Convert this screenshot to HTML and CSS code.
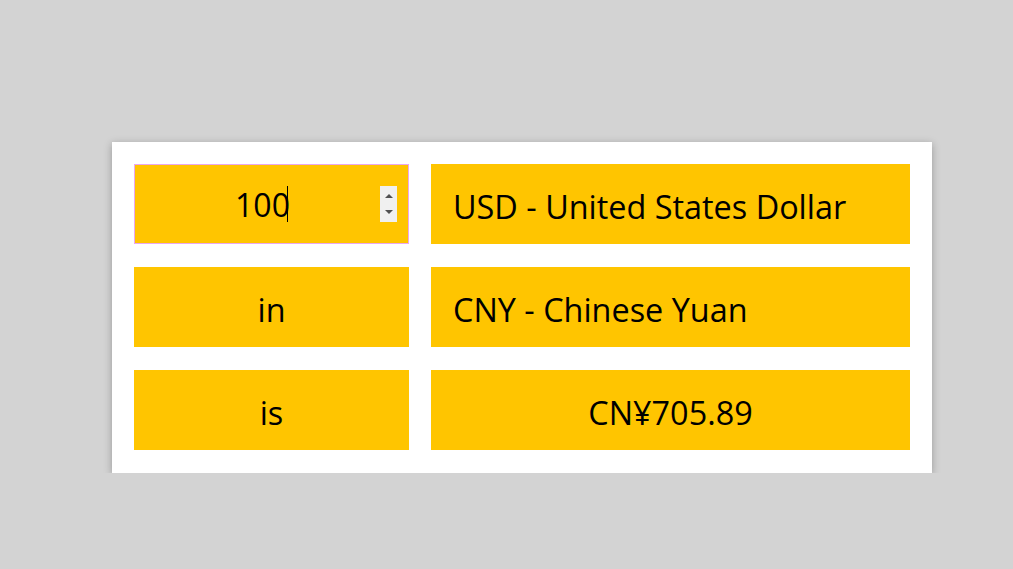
FILE: index.html
```html
<!DOCTYPE html>
<html>
<head>
<meta charset="utf-8">
<link rel="stylesheet" href="styles.css">
</head>
<body>
<div class="card">
  <div class="cell amount-cell">
    <input class="amount" type="number" value="100" autofocus>
    <span class="caret"></span>
    <span class="spinner"><span class="tri up"></span><span class="tri down"></span></span>
  </div>
  <div class="cell left">USD - United States Dollar</div>
  <div class="cell center">in</div>
  <div class="cell left">CNY - Chinese Yuan</div>
  <div class="cell center">is</div>
  <div class="cell center">CN¥705.89</div>
</div>
</body>
</html>
```

FILE: styles.css
```css
html, body {
  margin: 0;
  padding: 0;
  background: #d3d3d3;
}
body {
  padding: 142px 0 0 112px;
  font-family: "Open Sans", "Noto Sans", sans-serif;
}
.card {
  width: 776px;
  background: #fff;
  padding: 22px 22px 23px 22px;
  display: grid;
  grid-template-columns: 275px 479px;
  grid-auto-rows: 80px;
  column-gap: 22px;
  row-gap: 23px;
  box-shadow: 0 2px 8px rgba(0,0,0,0.28);
}
.cell {
  background: #ffc500;
  color: #000;
  font-size: 32.4px;
  display: flex;
  align-items: center;
  padding-top: 3px;
  box-sizing: border-box;
}
.center { justify-content: center; }
.left { padding-left: 22px; }
.amount-cell {
  padding: 0;
  position: relative;
}
.amount {
  width: 100%;
  height: 100%;
  box-sizing: border-box;
  border: 1px solid #eaa8ee;
  background: #ffc500;
  font-family: inherit;
  font-size: 32px;
  text-align: center;
  padding: 0 18px 0 0;
  outline: none;
  color: #000;
  caret-color: transparent;
  -moz-appearance: textfield;
}
.amount::-webkit-inner-spin-button,
.amount::-webkit-outer-spin-button {
  -webkit-appearance: none;
  margin: 0;
}
.caret {
  position: absolute;
  left: 153px;
  top: 22px;
  width: 1px;
  height: 36px;
  background: #000;
}
.spinner {
  position: absolute;
  left: 246px;
  top: 22px;
  width: 17px;
  height: 36px;
  background: #f0f0f0;
}
.tri {
  position: absolute;
  left: 5px;
  width: 0;
  height: 0;
  border-left: 4px solid transparent;
  border-right: 4px solid transparent;
}
.tri.up {
  top: 8px;
  border-bottom: 4px solid #505050;
}
.tri.down {
  top: 24px;
  border-top: 4px solid #505050;
}
```
